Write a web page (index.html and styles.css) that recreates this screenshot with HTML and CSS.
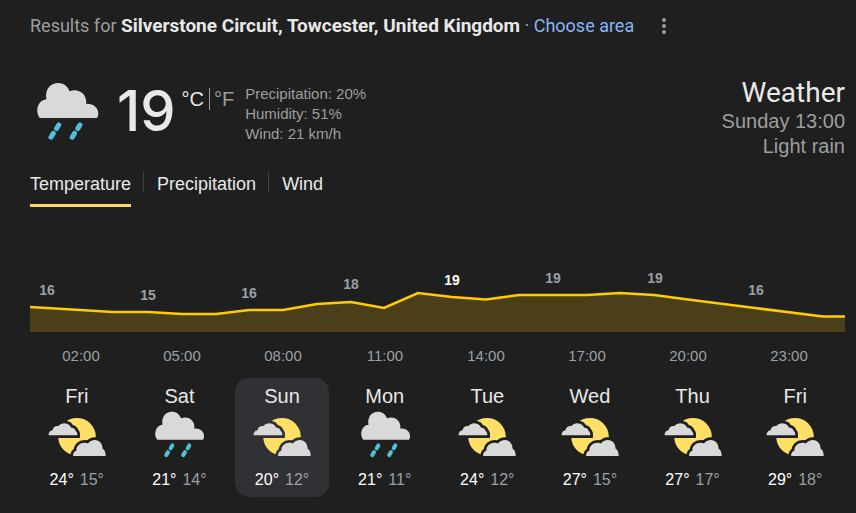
FILE: index.html
```html
<!DOCTYPE html>
<html lang="en">

<head>
  <meta charset="UTF-8" />
  <meta name="viewport" content="width=device-width, initial-scale=1.0" />
  <title>Weather</title>
  <link rel="stylesheet" href="styles.css">
</head>

<body>
  <!-- shared weather icons -->
  <svg class="sprite" aria-hidden="true">
    <symbol id="rain" viewBox="0 2 64 60">
      <path d="M4.800 38 C-0.500 31 3 20 11.400 19.200 C9.600 9.500 15.500 3 23 3 C28.500 3 32.800 6.300 34.500 11.200 C43.500 7.500 52.500 14 51.200 24.200 C58 22.500 63.500 28 63.300 33.500 C63.300 35 62.800 36.800 62 38 Z" fill="#d9d9d9" />
      <g stroke="#4fbfdb" stroke-width="5" stroke-linecap="round">
        <path d="M23.700 45 L21.600 48.600" />
        <path d="M18.300 53.400 L16 57.200" />
        <path d="M44.900 45 L42.800 48.600" />
        <path d="M39.500 53.400 L37.200 57.200" />
      </g>
    </symbol>
    <symbol id="cloudy" viewBox="0 0 60 48">
      <mask id="sun-mask" maskUnits="userSpaceOnUse" x="0" y="0" width="60" height="48">
        <rect width="60" height="48" fill="#fff" />
        <g fill="#000" stroke="#000" stroke-width="5.400">
          <use href="#cloud-back" />
          <use href="#cloud-front" />
        </g>
      </mask>
      <circle cx="30" cy="25.700" r="18.800" fill="#ffdf66" mask="url(#sun-mask)" />
      <g fill="#d9d9d9">
        <path id="cloud-back" d="M1.500 24.300 C1.500 21.500 3 19.500 5.500 19.200 C6 16 8.500 14.600 11.500 15 C13 13.200 15.500 12.200 18 12.400 C21 12.500 23.300 14.200 24 16.500 C27 16.500 28.500 18.800 28.700 20 C30 20.800 30.400 22.500 30.300 24.300 Z" />
        <path id="cloud-front" d="M26 45 C26.200 41.800 27.500 40.300 29.300 39.800 C29.300 35 33 31.800 37.500 31.800 C39 31.800 40 32 41 32.500 C42.500 30.300 45 29 48 29 C52.500 29.200 55.500 32.500 55.500 37.500 C57.800 39 58.800 41.800 58.700 45 Z" />
      </g>
    </symbol>
  </svg>

  <main class="weather">
    <header class="location">
      <p>Results for <strong>Silverstone Circuit, Towcester, United Kingdom</strong> <a href="#">· Choose area</a></p>
      <button class="menu" aria-label="More options">
        <svg width="6" height="16" viewBox="0 0 6 16" fill="#9e9e9e">
          <circle cx="3" cy="2" r="2" />
          <circle cx="3" cy="8" r="2" />
          <circle cx="3" cy="14" r="2" />
        </svg>
      </button>
    </header>

    <section class="current">
      <svg class="current-icon" role="img" aria-label="Light rain"><use href="#rain" /></svg>
      <span class="degrees">19</span>
      <div class="units">
        <span>°C</span>
        <a href="#">°F</a>
      </div>
      <div class="details">
        <div>Precipitation: 20%</div>
        <div>Humidity: 51%</div>
        <div>Wind: 21 km/h</div>
      </div>
      <div class="summary">
        <h1>Weather</h1>
        <div>Sunday 13:00</div>
        <div>Light rain</div>
      </div>
    </section>

    <nav class="tabs">
      <button class="tab active">Temperature</button>
      <button class="tab">Precipitation</button>
      <button class="tab">Wind</button>
    </nav>

    <svg class="chart" viewBox="0 0 815 135">
      <path class="area" d="M0 75 L17 76 L50 78 L83 80 L118 80 L152 82 L186 82 L219 78 L253 78 L287 72 L321 70 L354 76 L388 61 L422 65 L456 67.500 L489 63 L523 63 L557 63 L590 61 L624 63 L658 67.500 L725 76 L793 84.500 L815 84.500 V100 H0 Z" />
      <path class="line" d="M0 75 L17 76 L50 78 L83 80 L118 80 L152 82 L186 82 L219 78 L253 78 L287 72 L321 70 L354 76 L388 61 L422 65 L456 67.500 L489 63 L523 63 L557 63 L590 61 L624 63 L658 67.500 L725 76 L793 84.500 L815 84.500" />
      <g class="values">
        <text x="17" y="63">16</text>
        <text x="118" y="68">15</text>
        <text x="219" y="66">16</text>
        <text x="321" y="57">18</text>
        <text x="422" y="53" class="now">19</text>
        <text x="523" y="51">19</text>
        <text x="625" y="51">19</text>
        <text x="726" y="63">16</text>
      </g>
      <g class="hours">
        <text x="51" y="129">02:00</text>
        <text x="152" y="129">05:00</text>
        <text x="253" y="129">08:00</text>
        <text x="355" y="129">11:00</text>
        <text x="456" y="129">14:00</text>
        <text x="557" y="129">17:00</text>
        <text x="658" y="129">20:00</text>
        <text x="759" y="129">23:00</text>
      </g>
    </svg>

    <div class="days">
      <button class="day">
        <span class="name">Fri</span>
        <svg class="icon"><use href="#cloudy" /></svg>
        <span class="temps"><span>24°</span><span class="low">15°</span></span>
      </button>
      <button class="day">
        <span class="name">Sat</span>
        <svg class="icon"><use href="#rain" /></svg>
        <span class="temps"><span>21°</span><span class="low">14°</span></span>
      </button>
      <button class="day selected">
        <span class="name">Sun</span>
        <svg class="icon"><use href="#cloudy" /></svg>
        <span class="temps"><span>20°</span><span class="low">12°</span></span>
      </button>
      <button class="day">
        <span class="name">Mon</span>
        <svg class="icon"><use href="#rain" /></svg>
        <span class="temps"><span>21°</span><span class="low">11°</span></span>
      </button>
      <button class="day">
        <span class="name">Tue</span>
        <svg class="icon"><use href="#cloudy" /></svg>
        <span class="temps"><span>24°</span><span class="low">12°</span></span>
      </button>
      <button class="day">
        <span class="name">Wed</span>
        <svg class="icon"><use href="#cloudy" /></svg>
        <span class="temps"><span>27°</span><span class="low">15°</span></span>
      </button>
      <button class="day">
        <span class="name">Thu</span>
        <svg class="icon"><use href="#cloudy" /></svg>
        <span class="temps"><span>27°</span><span class="low">17°</span></span>
      </button>
      <button class="day">
        <span class="name">Fri</span>
        <svg class="icon"><use href="#cloudy" /></svg>
        <span class="temps"><span>29°</span><span class="low">18°</span></span>
      </button>
    </div>
  </main>
</body>

</html>
```

FILE: styles.css
```css
* {
  box-sizing: border-box;
}

body {
  margin: 0;
  background-color: #1f1f1f;
  color: #e8e8e8;
  font-family: "Liberation Sans", Arial, sans-serif;
}

button {
  background: none;
  border: none;
  padding: 0;
  color: inherit;
  font-family: inherit;
  cursor: pointer;
}

a {
  color: #8ab4f8;
  text-decoration: none;
}

.sprite {
  position: absolute;
  width: 0;
  height: 0;
}

.weather {
  padding: 15px 11px 16px 30px;
}

.location {
  display: flex;
  align-items: center;
  gap: 24px;
  font-family: Roboto, sans-serif;
  font-size: 18px;
  line-height: 22px;
  color: #9e9e9e;
}

.location p {
  margin: 0;
}

.location strong {
  font-size: 19px;
  color: #e8e8e8;
}

.menu {
  display: flex;
  padding: 3px;
}

.current {
  display: flex;
  align-items: flex-start;
  margin-top: 39px;
}

.current-icon {
  width: 64px;
  height: 60px;
  margin-top: 6px;
  margin-left: 5px;
}

.degrees {
  margin-left: 18px;
  font-family: Inter, sans-serif;
  font-size: 56px;
  font-weight: 500;
  line-height: 70px;
}

.units {
  display: flex;
  margin-top: 12px;
  margin-left: 6px;
  font-size: 20px;
  line-height: 22px;
}

.units a {
  margin-left: 5px;
  padding-left: 4px;
  border-left: 1px solid #9e9e9e;
  color: #9e9e9e;
}

.details {
  margin-top: 8px;
  margin-left: 11px;
  font-size: 15px;
  line-height: 20px;
  color: #9e9e9e;
}

.summary {
  margin-left: auto;
  text-align: right;
  font-size: 20px;
  line-height: 25px;
  color: #9e9e9e;
}

.summary h1 {
  margin: 0;
  font-family: Roboto, sans-serif;
  font-size: 28px;
  font-weight: 400;
  line-height: 33px;
  color: #e8e8e8;
}

.tabs {
  display: flex;
  align-items: flex-start;
  margin-top: 12px;
}

.tab {
  padding-bottom: 7px;
  border-bottom: 3px solid transparent;
  font-size: 18px;
  line-height: 26px;
}

.tab.active {
  border-bottom-color: #fdd663;
}

.tab + .tab::before {
  content: "";
  display: inline-block;
  height: 22px;
  margin: 0 13px 0 12px;
  border-left: 1px solid #3c4043;
  vertical-align: top;
}

.chart {
  display: block;
  width: 100%;
  margin-top: 25px;
}

.area {
  fill: #4a3f18;
}

.line {
  fill: none;
  stroke: #fc0;
  stroke-width: 2.5;
}

.values,
.hours {
  fill: #9aa0a6;
  text-anchor: middle;
}

.values {
  font-size: 14px;
  font-weight: bold;
}

.values .now {
  fill: #fff;
}

.hours {
  font-size: 15px;
}

.days {
  display: grid;
  grid-template-columns: repeat(8, 1fr);
  gap: 9px;
  margin-top: 11px;
  padding-right: 3px;
}

.day {
  display: flex;
  flex-direction: column;
  align-items: center;
  padding: 6px 0;
  border-radius: 14px;
}

.day.selected {
  background-color: #303134;
}

.name {
  font-size: 20px;
  line-height: 24px;
}

.icon {
  width: 60px;
  height: 48px;
  margin: 3px 0 10px;
}

.temps {
  display: flex;
  gap: 6px;
  font-size: 16px;
  line-height: 22px;
  color: #fff;
}

.low {
  color: #9aa0a6;
}
```
